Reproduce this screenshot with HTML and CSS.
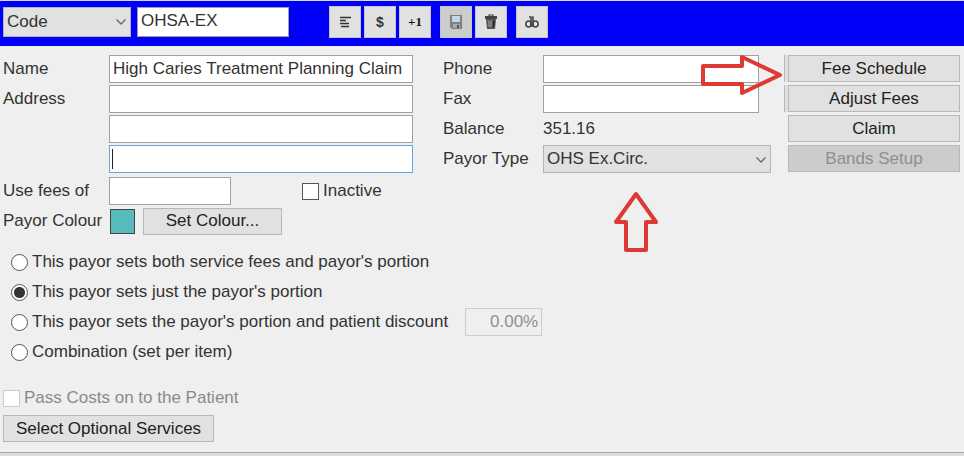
FILE: index.html
```html
<!DOCTYPE html>
<html lang="en">
<head>
    <meta charset="UTF-8">
    <meta name="viewport" content="width=device-width, initial-scale=1.0">
    <title>Payor</title>
    <link rel="stylesheet" href="styles.css">
</head>
<body>
    <header class="toolbar">
        <div class="select-wrap code-select">
            <select aria-label="Search by">
                <option>Code</option>
            </select>
            <svg class="chevron" viewBox="0 0 12 8"><path d="M1.5 1.5 6 6l4.5-4.5"/></svg>
        </div>
        <input class="code-input" type="text" value="OHSA-EX" aria-label="Code">
        <div class="tools">
            <div class="tool-group">
                <button class="tool" type="button" aria-label="Notes">
                    <svg viewBox="0 0 16 16" fill="none" stroke="#333" stroke-width="1.7"><path d="M3 3.5h11M3 6.5h6M3 9.500h9M4 12.500h8"/></svg>
                </button>
                <button class="tool dollar" type="button">$</button>
                <button class="tool plus" type="button">+1</button>
            </div>
            <div class="tool-group">
                <button class="tool" type="button" aria-label="Save" disabled>
                    <svg viewBox="0 0 16 16">
                        <path d="M2 1h12v14H4l-2-2z" fill="#808080"/>
                        <path d="M4 2h8v6H4z" fill="#c3d5e6"/>
                        <path d="M5 10h7v4H5z" fill="#aaa"/>
                        <path d="M9 11h2v3H9z" fill="#555"/>
                    </svg>
                </button>
                <button class="tool" type="button" aria-label="Delete">
                    <svg viewBox="0 0 16 16">
                        <path d="M6 2V1h4v1" fill="none" stroke="#444" stroke-width="1.2"/>
                        <path d="M2 2h12v3H2z" fill="#444"/>
                        <path d="M3 5h10l-1 10H4z" fill="#555"/>
                        <path d="M5.8 6.5 6.2 13M8 6.5V13" stroke="#aaa"/>
                        <path d="M11 6.5 10.500 13" stroke="#222" stroke-width="1.4"/>
                    </svg>
                </button>
            </div>
            <div class="tool-group">
                <button class="tool" type="button" aria-label="Database">
                    <svg viewBox="0 0 16 16" fill="none" stroke="#444" stroke-width="1.6"><ellipse cx="4.5" cy="10" rx="2.6" ry="3"/><ellipse cx="11.5" cy="10" rx="2.6" ry="3"/><path d="M7 2.5V13M9 2.5V13M5 3h2M8 3h1"/></svg>
                </button>
            </div>
        </div>
    </header>

    <main>
        <div class="top">
            <section class="details">
                <div class="rows">
                    <div class="row">
                        <label for="name">Name</label>
                        <input id="name" type="text" value="High Caries Treatment Planning Claim">
                    </div>
                    <div class="row">
                        <label for="address1">Address</label>
                        <input id="address1" type="text">
                    </div>
                    <div class="row">
                        <span></span>
                        <input type="text" aria-label="Address line 2">
                    </div>
                    <div class="row">
                        <span></span>
                        <div class="active-field">
                            <input type="text" aria-label="Address line 3">
                            <span class="caret"></span>
                        </div>
                    </div>
                </div>
                <div class="rows">
                    <div class="row">
                        <label for="fees">Use fees of</label>
                        <div class="inline">
                            <input id="fees" class="fees" type="text">
                            <label class="check"><input type="checkbox">Inactive</label>
                        </div>
                    </div>
                    <div class="row">
                        <span>Payor Colour</span>
                        <div class="inline colour">
                            <span class="swatch"></span>
                            <button class="btn set-colour" type="button">Set Colour...</button>
                        </div>
                    </div>
                </div>
            </section>

            <section class="contact">
                <div class="row">
                    <label for="phone">Phone</label>
                    <div class="short">
                        <input id="phone" type="text">
                        <svg class="arrow arrow-right" viewBox="0 0 84 42"><path d="M4 12h39V3l38 18-38 18v-9H4z"/></svg>
                    </div>
                </div>
                <div class="row">
                    <label for="fax">Fax</label>
                    <div class="short"><input id="fax" type="text"></div>
                </div>
                <div class="row">
                    <span>Balance</span>
                    <span>351.16</span>
                </div>
                <div class="row">
                    <label for="type">Payor Type</label>
                    <div class="select-wrap">
                        <select id="type">
                            <option>OHS Ex.Circ.</option>
                        </select>
                        <svg class="chevron" viewBox="0 0 12 8"><path d="M1.5 1.5 6 6l4.5-4.5"/></svg>
                        <svg class="arrow arrow-up" viewBox="0 0 46 62"><path d="M23 3 43 31H33v28H13V31H3z"/></svg>
                    </div>
                </div>
            </section>

            <nav class="actions">
                <div class="stacked"><button class="btn" type="button">Fee Schedule</button></div>
                <div class="stacked"><button class="btn" type="button">Adjust Fees</button></div>
                <button class="btn" type="button">Claim</button>
                <button class="btn" type="button" disabled>Bands Setup</button>
            </nav>
        </div>

        <div class="options">
            <label><input type="radio" name="mode">This payor sets both service fees and payor's portion</label>
            <label><input type="radio" name="mode" checked>This payor sets just the payor's portion</label>
            <div class="inline">
                <label><input type="radio" name="mode">This payor sets the payor's portion and patient discount</label>
                <input class="discount" type="text" value="0.00%" aria-label="Patient discount" disabled>
            </div>
            <label><input type="radio" name="mode">Combination (set per item)</label>
        </div>

        <div class="bottom">
            <label class="check off"><input type="checkbox" disabled>Pass Costs on to the Patient</label>
            <button class="btn services" type="button">Select Optional Services</button>
        </div>
    </main>
</body>
</html>
```

FILE: styles.css
```css
* {
    box-sizing: border-box;
}
body {
    margin: 0;
    min-height: 100vh;
    background-color: #dcdcdc;
    color: #333;
    font-family: "Liberation Sans", Arial, sans-serif;
    font-size: 17px;
    line-height: 20px;
}
input, select, button {
    font: inherit;
    color: inherit;
    margin: 0;
    border-radius: 0;
}
input[type="text"] {
    width: 100%;
    height: 28px;
    padding: 0 3px;
    border: 1px solid #a0a0a0;
    background-color: #fff;
}

/* toolbar */
.toolbar {
    display: flex;
    align-items: center;
    padding: 5px 3px 8px;
    border-top: 1px solid #d8d8e8;
    background-color: #0000fa;
}
.code-select {
    width: 128px;
    margin-right: 6px;
}
.toolbar select, .toolbar .code-input {
    height: 30px;
}
.toolbar .code-input {
    width: 152px;
    padding-bottom: 3px;
}
.tools {
    display: flex;
    gap: 9px;
    margin-left: 40px;
}
.tool-group {
    display: flex;
    gap: 3px;
}
.tool {
    display: flex;
    align-items: center;
    justify-content: center;
    width: 32px;
    height: 32px;
    padding: 0;
    border: 1px solid #c4c4d0;
    background-color: #e1e1e1;
}
.tool:disabled {
    background-color: #ccc;
}
.tool svg {
    width: 16px;
    height: 16px;
}
.dollar {
    font-size: 14px;
    font-weight: bold;
}
.plus {
    font-family: "Liberation Serif", serif;
    font-size: 13px;
    font-weight: bold;
    color: #111;
}

.select-wrap {
    position: relative;
}
select {
    display: block;
    width: 100%;
    height: 28px;
    padding: 0 24px 0 3px;
    border: 1px solid #b4b4b4;
    background-color: #e1e1e1;
    appearance: none;
}
.chevron {
    position: absolute;
    right: 4px;
    top: 11px;
    width: 12px;
    height: 8px;
    fill: none;
    stroke: #666;
    stroke-width: 1.3;
    pointer-events: none;
}

main {
    padding: 9px 4px 10px 3px;
    background-color: #efefef;
    border-bottom: 1px solid #aaa;
}
.top {
    display: grid;
    grid-template-columns: 427fr 328fr 176px;
    column-gap: 13px;
}
.details {
    display: flex;
    flex-direction: column;
    gap: 4px;
    padding-right: 17px;
}
.rows, .contact, .actions, .options {
    display: flex;
    flex-direction: column;
    gap: 2px;
}
.row {
    display: grid;
    grid-template-columns: 106px 1fr;
    align-items: center;
    height: 28px;
}
.contact .row {
    grid-template-columns: 100px 1fr;
}
.short {
    position: relative;
    margin-right: 12px;
}
.short input, .active-field input {
    display: block;
}
.inline {
    display: flex;
    align-items: center;
}
.active-field {
    position: relative;
}
.active-field input[type="text"] {
    border-color: #6ba3e0;
}
.caret {
    position: absolute;
    left: 3px;
    top: 4px;
    width: 1px;
    height: 20px;
    background-color: #222;
}
.inline .fees {
    width: 122px;
    margin-right: 71px;
}
.check {
    display: flex;
    align-items: center;
    gap: 4px;
}
input[type="checkbox"], input[type="radio"] {
    appearance: none;
    width: 17px;
    height: 17px;
    border: 1px solid #555;
    background-color: #fff;
}
input[type="radio"] {
    border-radius: 50%;
}
input[type="radio"]:checked {
    background-image: radial-gradient(circle, #333 5px, transparent 6px);
}
input[type="checkbox"]:disabled {
    border-color: #ccc;
}
.colour {
    gap: 8px;
    padding-left: 1px;
}
.swatch {
    width: 25px;
    height: 25px;
    border: 1px solid #444;
    background-color: #57babd;
}

/* buttons */
.btn {
    width: 100%;
    height: 27px;
    padding: 0;
    border: 1px solid #b8b8b8;
    background-color: #e1e1e1;
    color: #222;
}
.btn:hover:enabled {
    border-color: #0078d7;
}
.btn:disabled {
    background-color: #ccc;
    color: #8f8f8f;
}
.btn.set-colour {
    width: 139px;
}
.btn.services {
    width: 211px;
}
.actions {
    gap: 3px;
}
.actions .btn {
    display: block;
    width: 172px;
    margin-left: 4px;
}
.stacked {
    border: 1px solid #b8b8b8;
    border-width: 0 0 0 1px;
    background-color: #e1e1e1;
}
.actions .stacked .btn {
    margin-left: 3px;
}

/* red pointers */
.arrow {
    position: absolute;
    z-index: 1;
    fill: none;
    stroke: #dd3a33;
    stroke-width: 4;
    stroke-linejoin: round;
    pointer-events: none;
}
.arrow-right {
    right: -24px;
    top: -1px;
    width: 84px;
    height: 42px;
}
.arrow-up {
    left: 70px;
    top: 46px;
    width: 46px;
    height: 62px;
}

.options {
    padding: 13px 0 0 8px;
}
.options label {
    display: flex;
    align-items: center;
    gap: 4px;
    height: 28px;
}
.options .discount {
    width: 77px;
    margin-left: 17px;
    border-color: #ccc;
    background-color: #efefef;
    color: #8f8f8f;
    text-align: right;
}
.bottom {
    display: flex;
    flex-direction: column;
    gap: 7px;
    padding-top: 22px;
}
.off {
    color: #8a8a8a;
}
```
